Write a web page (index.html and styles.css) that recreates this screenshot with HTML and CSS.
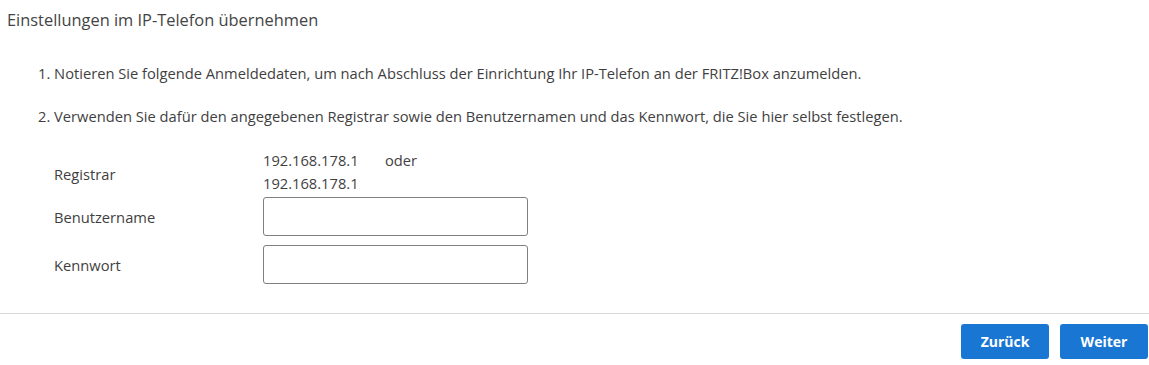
FILE: index.html
```html
<!DOCTYPE html>
<html lang="de">
<head>
    <meta charset="UTF-8">
    <title>Einstellungen im IP-Telefon übernehmen</title>
    <link rel="stylesheet" href="styles.css">
</head>
<body>

<div class="page">
    <h2 class="title">Einstellungen im IP-Telefon übernehmen</h2>

    <ol class="steps">
        <li>Notieren Sie folgende Anmeldedaten, um nach Abschluss der Einrichtung Ihr IP-Telefon an der FRITZ!Box anzumelden.</li>
        <li>Verwenden Sie dafür den angegebenen Registrar sowie den Benutzernamen und das Kennwort, die Sie hier selbst festlegen.</li>
    </ol>

    <div class="fields">
        <div class="row registrar-row">
            <label>Registrar</label>
            <div class="registrar">
                <div><span class="ip">192.168.178.1</span>oder</div>
                <div>192.168.178.1</div>
            </div>
        </div>
        <div class="row">
            <label for="user">Benutzername</label>
            <input type="text" id="user">
        </div>
        <div class="row">
            <label for="pass">Kennwort</label>
            <input type="password" id="pass">
        </div>
    </div>
</div>

<div class="actions">
    <button>Zurück</button>
    <button>Weiter</button>
</div>

</body>
</html>
```

FILE: styles.css
```css
body {
    margin: 0;
    font-family: "Open Sans", Lato, sans-serif;
    font-size: 14.7px;
    color: #3f3f3f;
    background: #fff;
}
.page {
    padding: 0 7px;
}
.title {
    margin: 0;
    padding-top: 9px;
    font-size: 16.4px;
    line-height: 22px;
    font-weight: normal;
    color: #444;
}
.steps {
    margin: 32px 0 0;
    padding-left: 31px;
    list-style-position: inside;
}
.steps li {
    line-height: 20px;
    margin-bottom: 23px;
}
.fields {
    padding-left: 47px;
    margin-top: 4px;
}
.row {
    display: flex;
    align-items: center;
    margin-bottom: 9px;
}
.row label {
    width: 209px;
}
.registrar-row {
    margin-bottom: 2px;
}
.registrar-row label {
    padding-top: 3px;
}
.registrar {
    line-height: 23px;
}
.ip {
    display: inline-block;
    width: 122px;
}
input {
    box-sizing: border-box;
    width: 265px;
    height: 39px;
    border: 1px solid #808080;
    border-radius: 3px;
    font: inherit;
    padding: 0 8px;
}
.actions {
    margin-top: 29px;
    border-top: 1px solid #d8d8d8;
    display: flex;
    justify-content: flex-end;
    gap: 11px;
    padding: 10px 1px 0 0;
}
.actions button {
    height: 35px;
    width: 88px;
    border: none;
    border-radius: 3px;
    background: #1976d2;
    color: #fff;
    font-family: inherit;
    font-size: 14px;
    font-weight: bold;
}
```
